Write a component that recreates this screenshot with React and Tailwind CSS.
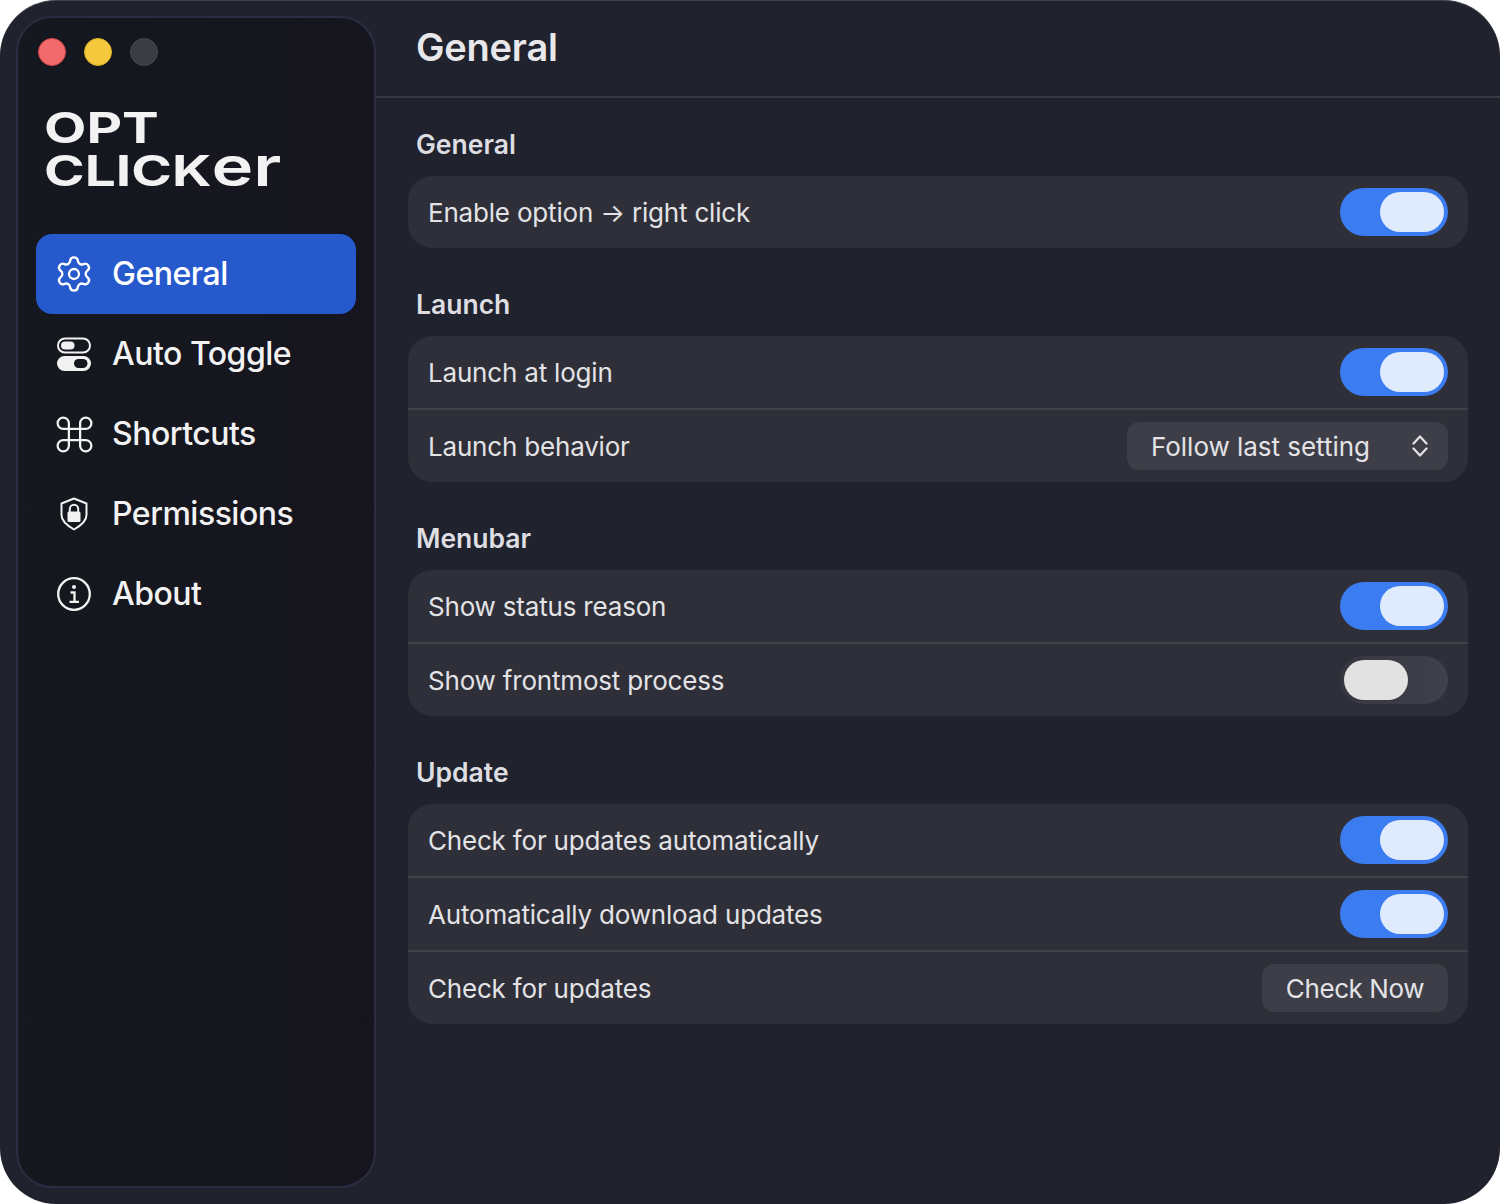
import React from "react";
import { Settings, Command } from "lucide-react";

const font = { fontFamily: "Inter, sans-serif" };

function ToggleIcon() {
  return (
    <svg viewBox="0 0 34 34" className="w-[34px] h-[34px]" fill="none">
      <rect x="1" y="1.5" width="32" height="14" rx="7" stroke="#f2f2f2" strokeWidth="2" />
      <rect x="4" y="4.5" width="13.5" height="8" rx="4" fill="#f2f2f2" />
      <rect x="0" y="19" width="34" height="15" rx="7.5" fill="#f2f2f2" />
      <rect x="17" y="22" width="13.5" height="9" rx="4.5" fill="#15171f" />
    </svg>
  );
}

function ShieldIcon() {
  return (
    <svg viewBox="0 0 34 34" className="w-[34px] h-[34px]" fill="none">
      <path d="M17 1.5 29.500 6.500v11.500c0 6-5.500 10.500-12.500 14.500-7-4-12.500-8.500-12.500-14.500V6.500Z" stroke="#f2f2f2" strokeWidth="2" strokeLinejoin="round" />
      <path d="M12.800 15v-3a4.200 4.200 0 0 1 8.400 0v3" stroke="#f2f2f2" strokeWidth="2" />
      <rect x="10.500" y="14.500" width="13" height="10.500" rx="1.500" fill="#f2f2f2" />
    </svg>
  );
}

function InfoIcon() {
  return (
    <svg viewBox="0 0 34 34" className="w-[34px] h-[34px]" fill="none">
      <circle cx="17" cy="17" r="15.800" stroke="#f2f2f2" strokeWidth="2.300" />
      <circle cx="17" cy="10" r="2" fill="#f2f2f2" />
      <path d="M13.500 15.500H17.500V24.500M12.500 24.800H22" stroke="#f2f2f2" strokeWidth="2.300" />
    </svg>
  );
}

function UpDown() {
  return (
    <svg viewBox="0 0 16 22" className="w-4 h-[22px]" fill="none">
      <path d="M1.500 8.500 8 1.500 14.500 8.500M1.500 13.500 8 20.500 14.500 13.500" stroke="#e3e3e6" strokeWidth="2.200" strokeLinecap="round" strokeLinejoin="round" />
    </svg>
  );
}

function NavItem({ icon, label, active }) {
  return (
    <div className={`h-20 rounded-2xl flex items-center pl-[21px] gap-[21px] text-[32px] font-medium tracking-[-0.5px] ${active ? "bg-[#2559cc] text-white" : "text-[#f2f2f2]"}`}>
      <span className="w-[34px] h-[34px] flex items-center justify-center shrink-0">{icon}</span>
      <span>{label}</span>
    </div>
  );
}

function Toggle({ on }) {
  return on ? (
    <div className="w-[108px] h-12 rounded-full bg-[#3b7cf0] flex items-center justify-end pr-1">
      <div className="w-16 h-10 rounded-full bg-[#dfeafd]" />
    </div>
  ) : (
    <div className="w-[108px] h-12 rounded-full bg-gradient-to-r from-[#363640] to-[#41414b] flex items-center pl-1">
      <div className="w-16 h-10 rounded-full bg-[#e2e2e2]" />
    </div>
  );
}

function Row({ label, children, first }) {
  return (
    <div className={`${first ? "h-[72px]" : "h-[74px] border-t-2 border-[#41414a]"} flex items-center justify-between pl-5 pr-5`}>
      <span className="text-[26px] tracking-[-0.19px] text-[#e3e3e6]">{label}</span>
      {children}
    </div>
  );
}

function Section({ title, children }) {
  return (
    <section>
      <h2 className="h-[80px] pl-2 pt-[31px] text-[26.5px] leading-[34px] font-semibold text-[#dedee2]">{title}</h2>
      <div className="rounded-3xl bg-[#2f2f39]">{children}</div>
    </section>
  );
}

export default function App() {
  return (
    <div className="w-[1500px] h-[1204px] bg-white" style={font}>
      <div className="w-full h-full rounded-[56px] bg-[#20222d] border-t border-[#3f414b] flex overflow-hidden">
        <aside className="w-[376px] shrink-0 pl-4 pt-[15px] pb-4">
          <div className="w-[360px] h-full rounded-[36px] border-2 border-[#2b2d42] bg-gradient-to-r from-[#15181f] to-[#16151f] flex flex-col px-[18px]">
            <div className="flex gap-[18px] pt-[20px] pl-[2px]">
              <span className="w-7 h-7 rounded-full bg-[#f26a6c] border border-[#d8454a]" />
              <span className="w-7 h-7 rounded-full bg-[#f4c93e] border border-[#dcae25]" />
              <span className="w-7 h-7 rounded-full bg-[#3a3c44] border border-[#454750]" />
            </div>
            <div className="mt-[40px] pl-[8px] h-[128px] text-[#f2f2f2] font-bold text-[42px] leading-[43px]">
              <div className="origin-left scale-x-[1.31]">OPT</div>
              <div className="origin-left scale-x-[1.31] whitespace-nowrap">CLICK<span className="text-[54px] leading-[0] font-semibold">er</span></div>
            </div>
            <nav className="flex flex-col">
              <NavItem active label="General" icon={<Settings size={40} strokeWidth={1.4} color="#fff" className="shrink-0" />} />
              <NavItem label="Auto Toggle" icon={<ToggleIcon />} />
              <NavItem label="Shortcuts" icon={<Command size={45} strokeWidth={1.2} color="#f2f2f2" className="shrink-0" />} />
              <NavItem label="Permissions" icon={<ShieldIcon />} />
              <NavItem label="About" icon={<InfoIcon />} />
            </nav>
          </div>
        </aside>
        <main className="flex-1 min-w-0">
          <header className="h-[97px] border-b-2 border-[#373943] pl-10 pt-[20px]">
            <h1 className="text-[38px] leading-[52px] font-semibold tracking-[-0.2px] text-[#e8e8ea]">General</h1>
          </header>
          <div className="pl-8 pr-8 flex flex-col gap-[8px] -mt-[2px]">
            <Section title="General">
              <Row first label="Enable option → right click"><Toggle on /></Row>
            </Section>
            <Section title="Launch">
              <Row first label="Launch at login"><Toggle on /></Row>
              <Row label="Launch behavior">
                <div className="w-[321px] h-12 rounded-xl bg-[#3e3e48] flex items-center justify-between pl-6 pr-[20px] text-[26px] tracking-[-0.03px] text-[#e3e3e6]">
                  <span>Follow last setting</span>
                  <UpDown />
                </div>
              </Row>
            </Section>
            <Section title="Menubar">
              <Row first label="Show status reason"><Toggle on /></Row>
              <Row label="Show frontmost process"><Toggle /></Row>
            </Section>
            <Section title="Update">
              <Row first label="Check for updates automatically"><Toggle on /></Row>
              <Row label="Automatically download updates"><Toggle on /></Row>
              <Row label="Check for updates">
                <div className="w-[186px] h-12 rounded-xl bg-[#3e3e48] flex items-center justify-center text-[26px] tracking-[-0.4px] text-[#e3e3e6]">Check Now</div>
              </Row>
            </Section>
          </div>
        </main>
      </div>
    </div>
  );
}
